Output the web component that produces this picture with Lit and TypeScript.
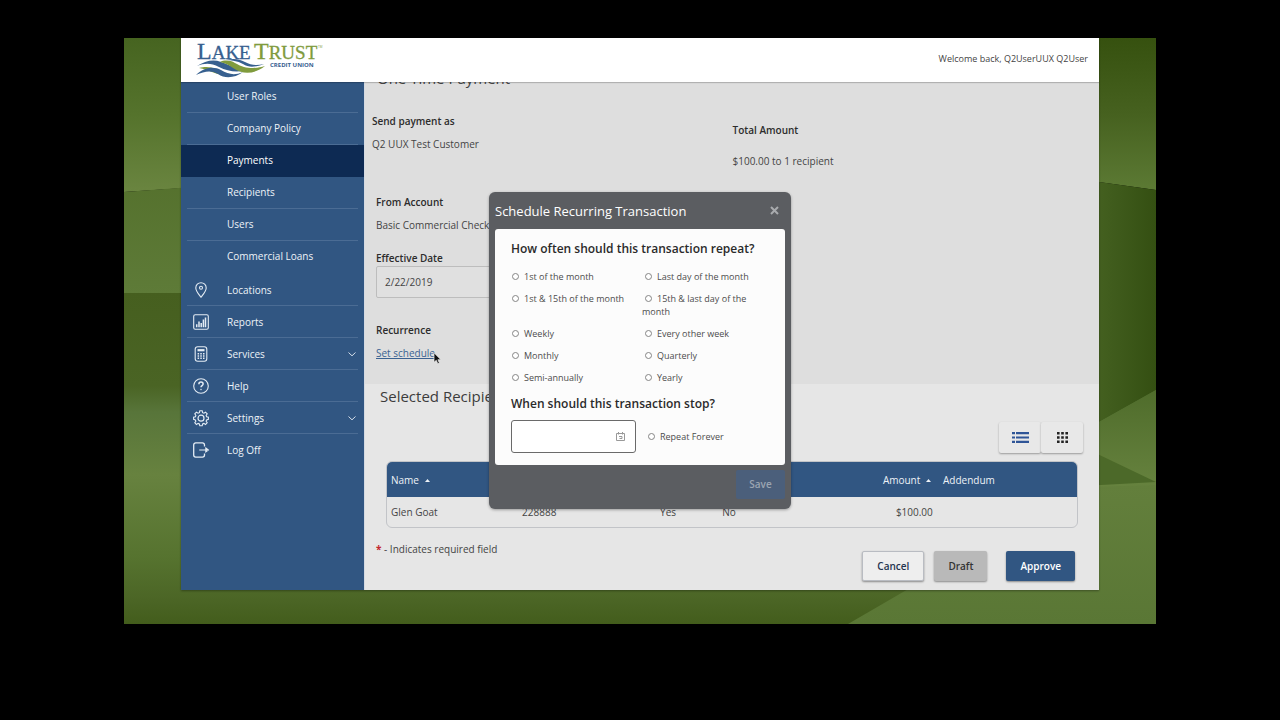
import { LitElement, html, svg, css, nothing } from "lit";
import { customElement, state } from "lit/decorators.js";

const icons: Record<string, unknown> = {
  Locations: svg`<path d="M8 15.200C5.200 11.600 2.800 8.900 2.800 5.900a5.200 5.200 0 0 1 10.400 0c0 3-2.400 5.700-5.200 9.300z"/><circle cx="8" cy="5.700" r="1.500"/>`,
  Reports: svg`<rect x=".7" y=".7" width="14.600" height="14.600" rx="1.500"/><path d="M3.700 13.200v-3M6 13.200V7.500M8.200 13.200V9M10.400 13.200V5.500M12.500 13.200V3.500" stroke-width="1.500"/>`,
  Services: svg`<rect x="2.200" y=".7" width="11.600" height="14.600" rx="2.500"/><path d="M4.500 4.200h7" stroke-width="2.200"/><path d="M4.600 7.700h7M4.600 10h7M4.600 12.300h7" stroke-width="1.500" stroke-dasharray="1.500 1.200"/>`,
  Help: svg`<circle cx="8" cy="8" r="7.300"/><path d="M5.900 6.200c0-1.300.9-2.100 2.100-2.100s2.100.8 2.100 1.900c0 1.500-2.100 1.600-2.100 3.200" stroke-width="1.500"/><circle cx="8" cy="11.500" r=".5" stroke-width=".7"/>`,
  Settings: svg`<path d="M6.800.8h2.400l.4 1.900 1.300.5 1.600-1 1.700 1.600-1.100 1.700.6 1.300 1.700.4v2.200l-1.800.5-.5 1.300 1.100 1.600-1.700 1.700-1.600-1.100-1.300.6-.4 1.800H6.800l-.4-1.800-1.300-.6-1.700 1.100-1.600-1.700 1.100-1.600-.6-1.300-1.700-.5V7.200l1.800-.4.5-1.300-1.100-1.700 1.600-1.600 1.700 1 1.300-.5z"/><circle cx="8" cy="8.200" r="3" stroke-width="1.200"/>`,
  "Log Off": svg`<path d="M11.500 4.600V2.900a2 2 0 0 0-2-2H2.700a2 2 0 0 0-2 2v10.200a2 2 0 0 0 2 2h6.800a2 2 0 0 0 2-2v-1.700" stroke-width="1.300"/><path d="M6.200 8h8M12.800 6 15.400 8l-2.600 2z"/>`,
};

const subMenu = ["User Roles", "Company Policy", "Payments", "Recipients", "Users", "Commercial Loans"];
const mainMenu = ["Locations", "Reports", "Services", "Help", "Settings", "Log Off"];
const expandable = new Set(["Services", "Settings"]);

const baseText = css`
  * { box-sizing: border-box; }
  button, input { font: inherit; color: inherit; }
`;

@customElement("backdrop-art")
class BackdropArt extends LitElement {
  static styles = css`
    :host { display: block; }
    .art { display: block; width: 100%; height: 100%; }
  `;
  render() {
    const grad = (id: string, stops: [number, string][], flat = false) => svg`
      <linearGradient id=${id} x1="0" y1="0" x2=${flat ? 1 : 0} y2=${flat ? 0 : 1}>
        ${stops.map(([o, c]) => svg`<stop offset=${o} stop-color=${c} />`)}
      </linearGradient>`;
    return html`<svg class="art" viewBox="0 0 1032 586" preserveAspectRatio="none" aria-hidden="true">
      <defs>
        ${grad("l1", [[0, "#466420"], [0.5, "#55732c"], [1, "#6a8540"]])}
        ${grad("l2", [[0, "#536f2b"], [1, "#5e7b38"]])}
        ${grad("l3", [[0, "#465f1f"], [0.28, "#4a6424"], [0.36, "#58753a"], [0.55, "#67823f"], [0.8, "#56732f"], [0.92, "#4c6626"], [1, "#435d1c"]])}
        ${grad("r1", [[0, "#36510f"], [0.5, "#46611f"], [1, "#5c7a34"]])}
        ${grad("r2", [[0, "#4d6a28"], [1, "#344f12"]], true)}
        ${grad("r3", [[0, "#4f6c2b"], [1, "#67833f"]])}
        ${grad("r4", [[0, "#637f3c"], [1, "#5a7735"]])}
      </defs>
      <path d="M0 0H516V120L0 154z" fill="url(#l1)" />
      <path d="M0 154 516 116V256H0z" fill="url(#l2)" />
      <path d="M0 255H1032V586H0z" fill="url(#l3)" />
      <path d="M516 0h516v152L516 80z" fill="url(#r1)" />
      <path d="M940 139l92 13v200l-92 52z" fill="url(#r2)" />
      <path d="M900 426l132-74v100H900z" fill="url(#r3)" />
      <path d="M940 400l92 44-92 5z" fill="#4c6929" />
      <path d="M724 586l236-137 72-2v139z" fill="url(#r4)" />
    </svg>`;
  }
}

@customElement("brand-logo")
class BrandLogo extends LitElement {
  static styles = css`
    :host { display: block; }
    .logo { display: block; width: 130px; height: 38px; }
    .word { font-family: "Liberation Serif", serif; font-size: 19px; stroke-width: 0.3; }
    .cap { font-size: 24px; }
    .tag { font: bold 6px "Open Sans", sans-serif; }
    .tm { font: 3px "Open Sans", sans-serif; }
    .blue { fill: #37608f; }
    .green { fill: #809b3d; }
    .word.blue { stroke: #37608f; }
    .word.green { stroke: #809b3d; }
  `;
  render() {
    return html`<svg class="logo" viewBox="0 0 130 38" role="img" aria-label="Lake Trust Credit Union">
      <text class="word blue" x="2" y="19"><tspan class="cap">L</tspan>AKE</text>
      <text class="word green" x="59" y="19"><tspan class="cap">T</tspan>RUST</text>
      <text class="tm green" x="123" y="8">TM</text>
      <text class="tag blue" x="75" y="27">CREDIT UNION</text>
      <path class="blue" d="M2 26C10 21 18 19 26 22c9 3 16 8 30 7-12 4-22 3-32-2-8-4-14-4-22-1z" />
      <path class="green" d="M25 22c4-2 10-2 15 1 7 4 11 5 18 5 5 0 8-1 12-2-10 8-22 9-32 2-4-3-8-5-13-6z" />
      <path class="green" d="M4 28c7-2 12-1 17 1 6 3 10 5 15 5-8 2-14 0-19-2-4-2-8-3-13-4z" />
      <path class="blue" d="M1 35c8-8 18-9 25-5 7 4 13 6 22 2-8 6-18 7-25 2-7-4-13-3-22 1z" />
      <path class="blue" d="M31 20c8-2 13-1 19 2 6 3 11 4 19 2-8 3-15 4-21 0-6-3-11-4-17-4z" />
    </svg>`;
  }
}

@customElement("side-nav")
class SideNav extends LitElement {
  static styles = [baseText, css`
    :host { display: block; background: #315682; color: #eef3f8; overflow: hidden; }
    .nav { margin-top: -1px; }
    .list { list-style: none; margin: 0; padding: 0; }
    .sub { padding-bottom: 1px; }
    .item { padding: 0 6px; }
    .link {
      display: grid; grid-template-columns: 27px 1fr 10px; column-gap: 13px; align-items: center;
      height: 32px; padding: 0; color: inherit; text-decoration: none; border-bottom: 1px solid #4b6c94;
    }
    .item:last-child .link { border-bottom-color: transparent; }
    .active { background: #0d2a53; color: #fff; }
    .active .link { border-bottom-color: transparent; }
    .icon { width: 16px; height: 16px; justify-self: center; fill: none; stroke: #e4ecf4; stroke-width: 1.1; overflow: visible; }
    .label { grid-column: 2; }
    .sub .label { padding-bottom: 2px; }
    .chev { width: 8px; height: 8px; fill: none; stroke: #d5dfea; }
  `];
  private row(label: string) {
    return html`<li class="item ${label === "Payments" ? "active" : ""}">
      <a class="link" href="#">
        ${icons[label] ? html`<svg class="icon" viewBox="0 0 16 16" aria-hidden="true">${icons[label]}</svg>` : nothing}
        <span class="label">${label}</span>
        ${expandable.has(label) ? html`<svg class="chev" viewBox="0 0 8 8" aria-hidden="true"><path d="M.5 2.500 4 5.800l3.500-3.300" /></svg>` : nothing}
      </a>
    </li>`;
  }
  render() {
    return html`<nav class="nav">
      <ul class="list sub">${subMenu.map((l) => this.row(l))}</ul>
      <ul class="list">${mainMenu.map((l) => this.row(l))}</ul>
    </nav>`;
  }
}

@customElement("schedule-dialog")
class ScheduleDialog extends LitElement {
  static styles = [baseText, css`
    :host { display: block; width: 302px; }
    .dialog { background: #5b5d61; border-radius: 6px; padding: 0 6px; box-shadow: 0 1px 3px #0005; }
    .head { display: flex; align-items: center; justify-content: space-between; height: 37px; padding-right: 5px; }
    .title { margin: 0; font-size: 13px; font-weight: 500; color: #fff; }
    .close { background: none; border: 0; padding: 0; width: 11px; height: 11px; display: grid; place-items: center; }
    .x { width: 9px; height: 9px; stroke: #a9abae; stroke-width: 2; }
    .body { background: #fcfcfc; border-radius: 3px; padding: 10px 10px 12px 16px; color: #4c4c4c; }
    .question { margin: 0; font-size: 12px; line-height: 20px; font-weight: 600; color: #2a2a2a; }
    .set { border: 0; margin: 0; padding: 0; min-width: 0; }
    .question-legend { padding: 0; }
    .options { display: grid; grid-template-columns: 133px 123px; row-gap: 9px; margin: 11px 0 10px -2px; font-size: 9px; line-height: 13px; }
    .radio { appearance: none; width: 7px; height: 7px; border: 1px solid #858585; border-radius: 50%; margin: 0 5px 0 3px; background: #fff; vertical-align: 0; }
    .radio:checked { background: #315682; }
    .stop { display: grid; grid-template-columns: 125px 1fr; column-gap: 9px; align-items: center; margin-top: 6px; font-size: 9px; line-height: 13px; }
    .date { display: flex; align-items: center; height: 33px; padding-right: 10px; border: 1px solid #6a6a6a; border-radius: 3px; background: #fff; }
    .field { flex: 1; min-width: 0; border: 0; outline: 0; background: none; padding: 0 8px; }
    .cal { width: 9px; height: 9px; fill: none; stroke: #999; }
    .foot { display: flex; justify-content: flex-end; align-items: center; height: 44px; padding-bottom: 6px; }
    .save { width: 49px; height: 29px; border: 0; border-radius: 2px; background: #4b5f7b; color: #9ba5b2; font-weight: 600; padding: 0; }
  `];
  @state() private choice = "";
  render() {
    const options = ["1st of the month", "Last day of the month", "1st & 15th of the month", "15th & last day of the month",
      "Weekly", "Every other week", "Monthly", "Quarterly", "Semi-annually", "Yearly"];
    return html`<section class="dialog" role="dialog" aria-labelledby="t">
      <header class="head">
        <h2 class="title" id="t">Schedule Recurring Transaction</h2>
        <button class="close" aria-label="Close"><svg class="x" viewBox="0 0 9 9"><path d="M1 1l7 7M8 1 1 8" /></svg></button>
      </header>
      <div class="body">
        <fieldset class="set">
          <legend class="question question-legend">How often should this transaction repeat?</legend>
          <div class="options">
            ${options.map((o) => html`<label><input class="radio" type="radio" name="freq" .checked=${this.choice === o} @change=${() => (this.choice = o)} />${o}</label>`)}
          </div>
        </fieldset>
        <h3 class="question" id="s">When should this transaction stop?</h3>
        <div class="stop">
          <div class="date">
            <input class="field" type="text" aria-labelledby="s" />
            <svg class="cal" viewBox="0 0 9 9" aria-hidden="true"><path d="M.5 1.500h8v7h-8zM2.500 0v2.500M6.500 0v2.500M3 4.500h3v2H3.500" /></svg>
          </div>
          <label><input class="radio" type="radio" name="stop" />Repeat Forever</label>
        </div>
      </div>
      <footer class="foot"><button class="save" disabled>Save</button></footer>
    </section>`;
  }
}

@customElement("payment-page")
class PaymentPage extends LitElement {
  static styles = [baseText, css`
    :host { display: block; background: #e6e6e6; color: #444; border-left: 1px solid #d4dae2; overflow: hidden; }
    .top { background: #dedede; padding: 0 6px 23px 7px; }
    .title { margin: -14px 0 25px 5px; font-size: 15px; line-height: 20px; font-weight: 400; color: #444; }
    .cols { display: grid; grid-template-columns: 1fr 1fr; }
    .label { display: block; margin: 0; font-weight: 600; color: #2c2c2c; line-height: 16px; }
    .value { margin: 7px 0 0; line-height: 16px; }
    .details { margin: 42px 0 0 4px; }
    .total { padding-top: 9px; }
    .total .value { margin-top: 15px; }
    .effective { margin-top: 17px; }
    .date { display: block; width: 240px; height: 32px; border: 1px solid #bdbdbd; border-radius: 2px; background: #e0e0e0; padding: 0 8px; }
    .recur { margin-top: 24px; }
    .anchor { position: relative; display: inline-block; }
    .link { color: #3b6292; }
    .pointer { position: absolute; left: 57px; top: 7px; width: 9px; height: 13px; }
    .lower { padding: 2px 15px 9px 11px; }
    .heading { margin: 0 0 0 4px; font-size: 15px; line-height: 20px; font-weight: 400; color: #3c3c3c; }
    .views { display: flex; justify-content: flex-end; margin: 16px 0 8px; padding-right: 1px; }
    .view { width: 42px; height: 31px; padding: 0; border: 0; border-radius: 2px; background: #e8e8e8; box-shadow: 0 1px 2px #0005; display: grid; place-items: center; }
    .glyph { width: 17px; height: 11px; }
    .frame { margin: 0 6px 0 10px; border: 1px solid #c2c4c8; border-radius: 6px; overflow: hidden; }
    .table { width: 100%; table-layout: fixed; border-collapse: collapse; text-align: left; }
    .table th { background: #315682; color: #eef2f7; font-weight: 400; height: 35px; padding: 0 0 0 4px; }
    .table td { height: 30px; padding: 0 0 0 4px; }
    .name { width: 19%; } .acct { width: 20%; } .flag { width: 9%; } .notify { width: 23%; }
    .table .amount { width: 9%; padding-left: 6px; }
    .table .money { padding-left: 19px; }
    .caret { width: 5px; height: 3px; margin-left: 3px; vertical-align: 2px; fill: currentColor; }
    .end { display: flex; justify-content: space-between; align-items: flex-start; padding-top: 13px; }
    .note { margin: 0; line-height: 16px; }
    .star { color: #c3282e; font-weight: 700; }
    .actions { display: flex; gap: 10px; padding: 10px 9px 0 0; }
    .btn { height: 30px; padding: 0 14px; border: 0; border-radius: 2px; font-weight: 600; box-shadow: 0 1px 2px #0006; }
    .cancel { background: #eee; color: #24344f; border: 1px solid #b9bcc2; }
    .draft { background: #b9b9b9; color: #333; }
    .approve { background: #315682; color: #fff; margin-left: 9px; }
  `];
  render() {
    const caret = html`<svg class="caret" viewBox="0 0 5 3" aria-hidden="true"><path d="M0 3 2.500 0 5 3z" /></svg>`;
    return html`
      <section class="top">
        <h1 class="title">One Time Payment</h1>
        <div class="cols">
          <div>
            <p class="label">Send payment as</p>
            <p class="value">Q2 UUX Test Customer</p>
            <div class="details">
              <p class="label">From Account</p>
              <p class="value">Basic Commercial Checking</p>
              <label class="label effective" for="d">Effective Date</label>
              <input class="date" id="d" type="text" value="2/22/2019" />
              <p class="label recur">Recurrence</p>
              <p class="value"><span class="anchor"><a class="link" href="#">Set schedule</a>
                <svg class="pointer" viewBox="0 0 9 13" aria-hidden="true"><path d="M1 .8v9.500l2.300-2 1.500 3.500 1.600-.7-1.500-3.400h3z" fill="#111" stroke="#eee" stroke-width=".7" /></svg></span></p>
            </div>
          </div>
          <div class="total">
            <p class="label">Total Amount</p>
            <p class="value">$100.00 to 1 recipient</p>
          </div>
        </div>
      </section>
      <section class="lower">
        <h2 class="heading">Selected Recipients</h2>
        <div class="views">
          <button class="view" aria-label="List view"><svg class="glyph" viewBox="0 0 17 11" fill="#2f5597"><path d="M0 0h3v2.200H0zM4 0h13v2.200H4zM0 4.400h3v2.200H0zM4 4.400h13v2.200H4zM0 8.800h3V11H0zM4 8.800h13V11H4z" /></svg></button>
          <button class="view" aria-label="Grid view"><svg class="glyph" viewBox="0 0 17 11" fill="#222"><path d="M3 0h2.600v2.600H3zM7.200 0h2.600v2.600H7.200zM11.400 0H14v2.600h-2.600zM3 4.200h2.600v2.600H3zM7.200 4.200h2.600v2.600H7.200zM11.400 4.200H14v2.600h-2.600zM3 8.400h2.600V11H3zM7.200 8.400h2.600V11H7.200zM11.400 8.400H14V11h-2.600z" /></svg></button>
        </div>
        <div class="frame">
          <table class="table">
            <thead><tr>
              <th class="name">Name ${caret}</th><th class="acct"></th><th class="flag"></th><th class="notify"></th>
              <th class="amount">Amount ${caret}</th><th>Addendum</th>
            </tr></thead>
            <tbody><tr><td>Glen Goat</td><td>228888</td><td>Yes</td><td>No</td><td class="money">$100.00</td><td></td></tr></tbody>
          </table>
        </div>
        <div class="end">
          <p class="note"><span class="star">*</span> - Indicates required field</p>
          <div class="actions">
            <button class="btn cancel">Cancel</button>
            <button class="btn draft">Draft</button>
            <button class="btn approve">Approve</button>
          </div>
        </div>
      </section>`;
  }
}

@customElement("app-root")
class AppRoot extends LitElement {
  static styles = [baseText, css`
    :host { display: block; min-height: 100vh; box-sizing: border-box; background: #000; padding: 38px 124px; font: 10px/16px "Open Sans", "Noto Sans", sans-serif; }
    .stage { position: relative; padding: 0 57px 34px; isolation: isolate; }
    .backdrop { position: absolute; inset: 0; z-index: -1; }
    .window { box-shadow: 0 1px 2px #0005; }
    .bar { position: relative; display: flex; justify-content: space-between; align-items: center; height: 44px; padding: 0 11px 3px 14px; background: #fff; color: #444; font-size: 9px; box-shadow: 0 1px 1px #0003; }
    .panes { display: grid; grid-template-columns: 183px minmax(0, 1fr); }
    .overlay { position: absolute; inset: 0; display: flex; justify-content: center; align-items: flex-start; padding-top: 154px; }
    .hello { padding-top: 1px; }
  `];
  render() {
    return html`<div class="stage">
      <backdrop-art class="backdrop"></backdrop-art>
      <div class="window">
        <header class="bar">
          <brand-logo></brand-logo>
          <span class="hello">Welcome back, Q2UserUUX Q2User</span>
        </header>
        <div class="panes">
          <side-nav></side-nav>
          <payment-page></payment-page>
        </div>
      </div>
      <div class="overlay"><schedule-dialog></schedule-dialog></div>
    </div>`;
  }
}
